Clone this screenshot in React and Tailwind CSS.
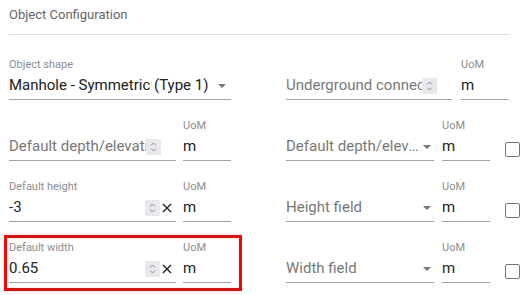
const Arrow = () => (
  <svg width="8" height="4" viewBox="0 0 8 4" className="shrink-0">
    <path d="M0 0h8L4 4z" fill="#757575" />
  </svg>
);

const Spin = ({ over = false }) => (
  <span
    className={`flex h-[16px] w-[15px] shrink-0 items-center justify-center bg-[#e9e9ed] ${
      over ? "absolute right-0 top-1/2 -translate-y-1/2" : ""
    }`}
  >
    <svg width="7" height="12" viewBox="0 0 7 12">
      <path d="M1 4.5 3.5 2 6 4.5M1 7.5 3.5 10 6 7.5" stroke="#8a8a8a" fill="none" strokeWidth="1" />
    </svg>
  </span>
);

const Clear = () => (
  <svg width="10" height="10" viewBox="0 0 10 10" className="ml-[2px] shrink-0">
    <path d="M1 1l8 8M9 1 1 9" stroke="#222" strokeWidth="1.4" />
  </svg>
);

function Field({ label, className = "", children }) {
  return (
    <div className={`flex shrink-0 flex-col ${className}`}>
      <div className="h-[14px] whitespace-nowrap text-[11px] leading-[14px] text-[#8c8c8c]">{label}</div>
      <div className="flex h-[28px] items-center border-b border-[#a3a3a3] text-[15px]">{children}</div>
    </div>
  );
}

const Uom = ({ className = "" }) => (
  <Field label="UoM" className={`w-[48px] ${className}`}>
    <span className="text-[#222]">m</span>
  </Field>
);

const Check = () => (
  <div className="ml-[15px] mt-[23px] h-[15px] w-[15px] shrink-0 rounded-[2px] border-[1.5px] border-[#757575]" />
);

const Placeholder = ({ children }) => (
  <span className="min-w-0 flex-1 truncate whitespace-nowrap text-[#787878]">{children}</span>
);

// placeholder whose end is covered by the number spinner
const SpinText = ({ children, pr }) => (
  <span className={`relative flex min-w-0 flex-1 items-center ${pr}`}>
    <span className="min-w-0 flex-1 truncate whitespace-nowrap text-[#787878]">{children}</span>
    <Spin over />
  </span>
);

export default function App() {
  return (
    <div className="relative h-[295px] w-[530px] overflow-hidden bg-white px-[9px] pt-[7px] font-['Roboto',sans-serif]">
      <div className="h-[16px] text-[13px] leading-[16px] text-[#666]">Object Configuration</div>
      <div className="mt-[11px] w-[501px] border-t border-[#dcdcdc]" />

      <div className="mt-[23px] flex flex-col gap-[19px]">
        {/* row 1 */}
        <div className="flex">
          <Field label="Object shape" className="w-[222px]">
            <span className="flex-1 whitespace-nowrap text-[#222]">Manhole - Symmetric (Type 1)</span>
            <span className="mr-[5px]"><Arrow /></span>
          </Field>
          <div className="ml-[55px] flex">
            <Field label="" className="w-[166px]">
              <SpinText pr="mr-[15px]">Underground connection</SpinText>
            </Field>
            <Uom className="ml-[9px]" />
          </div>
        </div>

        {/* row 2 */}
        <div className="flex">
          <div className="flex w-[222px]">
            <Field label="" className="w-[167px]">
              <SpinText pr="mr-[15px]">Default depth/elevation</SpinText>
            </Field>
            <Uom className="ml-[7px]" />
          </div>
          <div className="ml-[55px] flex">
            <Field label="" className="w-[148px]">
              <Placeholder>Default depth/elevation</Placeholder>
              <span className="ml-[4px] mr-[3px]"><Arrow /></span>
            </Field>
            <Uom className="ml-[8px]" />
            <Check />
          </div>
        </div>

        {/* row 3 */}
        <div className="flex">
          <div className="flex w-[222px]">
            <Field label="Default height" className="w-[167px]">
              <span className="flex-1 text-[#222]">-3</span>
              <Spin />
              <Clear />
              <span className="w-[4px]" />
            </Field>
            <Uom className="ml-[7px]" />
          </div>
          <div className="ml-[55px] flex">
            <Field label="" className="w-[148px]">
              <Placeholder>Height field</Placeholder>
              <span className="mr-[3px]"><Arrow /></span>
            </Field>
            <Uom className="ml-[8px]" />
            <Check />
          </div>
        </div>

        {/* row 4 */}
        <div className="flex">
          <div className="flex w-[222px]">
            <Field label="Default width" className="w-[167px]">
              <span className="flex-1 text-[#222]">0.65</span>
              <Spin />
              <Clear />
              <span className="w-[4px]" />
            </Field>
            <Uom className="ml-[7px]" />
          </div>
          <div className="ml-[55px] flex">
            <Field label="" className="w-[148px]">
              <Placeholder>Width field</Placeholder>
              <span className="mr-[3px]"><Arrow /></span>
            </Field>
            <Uom className="ml-[8px]" />
            <Check />
          </div>
        </div>
      </div>

      <div className="pointer-events-none absolute left-[4px] top-[235px] h-[56px] w-[238px] border-[3px] border-[#ff0000]" />
    </div>
  );
}
